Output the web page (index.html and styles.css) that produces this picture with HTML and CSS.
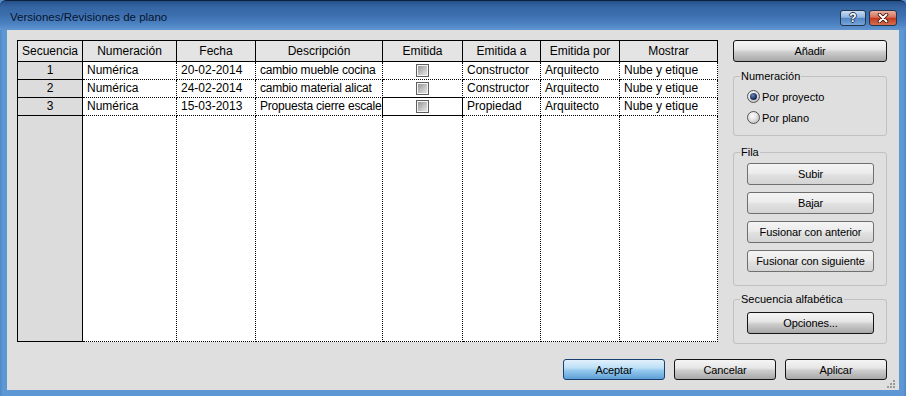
FILE: index.html
```html
<!DOCTYPE html>
<html lang="es">
<head>
<meta charset="utf-8">
<title>Versiones/Revisiones de plano</title>
<link rel="stylesheet" href="styles.css">
</head>
<body>
<div class="window">
  <div class="titlebar">
    <span class="title">Versiones/Revisiones de plano</span>
    <div class="caption">
      <span class="cbtn help">?</span>
      <span class="cbtn close">
        <svg width="12" height="10" viewBox="0 0 12 10"><path d="M2.5 1.5 L9.5 8.5 M9.5 1.5 L2.5 8.5" stroke="#3a0a04" stroke-width="3.6" stroke-linecap="round"/><path d="M2.5 1.5 L9.5 8.5 M9.5 1.5 L2.5 8.5" stroke="#fff" stroke-width="2" stroke-linecap="round"/></svg>
      </span>
    </div>
  </div>
  <div class="client">
    <div class="main">
      <div class="grid">
        <div class="th">Secuencia</div>
        <div class="th">Numeración</div>
        <div class="th">Fecha</div>
        <div class="th">Descripción</div>
        <div class="th">Emitida</div>
        <div class="th">Emitida a</div>
        <div class="th">Emitida por</div>
        <div class="th">Mostrar</div>

        <div class="rh">1</div>
        <div class="td">Numérica</div>
        <div class="td">20-02-2014</div>
        <div class="td desc">cambio mueble cocina</div>
        <div class="td chk"><span class="cb"></span></div>
        <div class="td">Constructor</div>
        <div class="td">Arquitecto</div>
        <div class="td">Nube y etique</div>

        <div class="rh">2</div>
        <div class="td">Numérica</div>
        <div class="td">24-02-2014</div>
        <div class="td desc">cambio material alicat</div>
        <div class="td chk"><span class="cb"></span></div>
        <div class="td">Constructor</div>
        <div class="td">Arquitecto</div>
        <div class="td">Nube y etique</div>

        <div class="rh">3</div>
        <div class="td">Numérica</div>
        <div class="td">15-03-2013</div>
        <div class="td desc">Propuesta cierre escale</div>
        <div class="td chk sel"><span class="cb"></span></div>
        <div class="td">Propiedad</div>
        <div class="td">Arquitecto</div>
        <div class="td">Nube y etique</div>

        <div class="rh"></div>
        <div class="td"></div>
        <div class="td"></div>
        <div class="td"></div>
        <div class="td"></div>
        <div class="td"></div>
        <div class="td"></div>
        <div class="td"></div>
      </div>

      <div class="side">
        <button class="btn">Añadir</button>

        <fieldset class="group g-num">
          <legend>Numeración</legend>
          <div class="radio"><span class="rb"><span class="dot"></span></span><span>Por proyecto</span></div>
          <div class="radio"><span class="rb"></span><span>Por plano</span></div>
        </fieldset>

        <fieldset class="group g-fila">
          <legend>Fila</legend>
          <div class="stack">
            <button class="btn light">Subir</button>
            <button class="btn light">Bajar</button>
            <button class="btn light">Fusionar con anterior</button>
            <button class="btn light">Fusionar con siguiente</button>
          </div>
        </fieldset>

        <fieldset class="group g-seq">
          <legend>Secuencia alfabética</legend>
          <button class="btn">Opciones...</button>
        </fieldset>
      </div>
    </div>

    <div class="footer">
      <button class="btn fbtn default">Aceptar</button>
      <button class="btn fbtn">Cancelar</button>
      <button class="btn fbtn">Aplicar</button>
    </div>

    <svg class="grip" width="10" height="10" viewBox="0 0 10 10">
      <rect x="7" y="1" width="2" height="2" fill="#9a9a9a"/>
      <rect x="4" y="4" width="2" height="2" fill="#9a9a9a"/>
      <rect x="7" y="4" width="2" height="2" fill="#9a9a9a"/>
      <rect x="1" y="7" width="2" height="2" fill="#9a9a9a"/>
      <rect x="4" y="7" width="2" height="2" fill="#9a9a9a"/>
      <rect x="7" y="7" width="2" height="2" fill="#9a9a9a"/>
    </svg>
  </div>
</div>
</body>
</html>
```
FILE: styles.css
```css
* { box-sizing: border-box; }

html, body {
  margin: 0;
  padding: 0;
}

body {
  width: 906px;
  height: 396px;
  overflow: hidden;
  font-family: "Liberation Sans", Arial, sans-serif;
  background: #5b96d2;
}

.window {
  width: 906px;
  height: 396px;
  display: flex;
  flex-direction: column;
  background: linear-gradient(90deg, #4f88c6 0, #5d98d4 3px, #5d98d4 903px, #4f88c6 906px);
}

.titlebar {
  height: 30px;
  flex: none;
  display: flex;
  justify-content: space-between;
  align-items: flex-start;
  padding: 0 9px 0 10px;
  border-top: 1px solid #0c203d;
  border-radius: 6px 6px 0 0;
  background: linear-gradient(#25508a 0, #3565a3 6px, #3d6fae 14px, #4a80c0 22px, #6196d1 29px);
}

.title {
  margin-top: 9px;
  font-size: 11.5px;
  line-height: 14px;
  color: #07142e;
}

.caption {
  display: flex;
  gap: 3px;
  margin-top: 9px;
}

.cbtn {
  height: 16px;
  border: 1px solid #26344c;
  border-radius: 3px;
  display: flex;
  align-items: center;
  justify-content: center;
}

.help {
  width: 26px;
  background: linear-gradient(#c9def4 0, #8fb4e0 45%, #5486c4 52%, #76a6dc 100%);
  color: #fff;
  font-weight: bold;
  font-size: 12px;
  line-height: 12px;
  text-shadow: 1px 0 0 #1d3456, -1px 0 0 #1d3456, 0 1px 0 #1d3456, 0 -1px 0 #1d3456;
}

.close {
  width: 28px;
  background: linear-gradient(#eab1a2 0, #d76f57 45%, #c23a1f 52%, #d5704f 100%);
}

.client {
  flex: 1;
  margin: 0 7px 6px 7px;
  padding: 10px 12px 0 10px;
  background: #dfdfdf;
  display: flex;
  flex-direction: column;
  position: relative;
}

.main {
  display: flex;
  gap: 15px;
}

/* grid / table */
.grid {
  width: 701px;
  height: 302px;
  display: grid;
  grid-template-columns: 65px 94px 79px 127px 80px 78px 79px 98px;
  grid-template-rows: 21px 18px 18px 18px 1fr;
  border-top: 1px solid #000;
  border-left: 1px solid #000;
  background: #fff;
  font-size: 12px;
  color: #000;
}

.th {
  background: #e4e4e4;
  border-right: 1px solid #000;
  border-bottom: 1px solid #000;
  display: flex;
  align-items: center;
  justify-content: center;
  padding-bottom: 1px;
}

.rh {
  background: #dcdcdc;
  border-right: 1px solid #000;
  border-bottom: 1px solid #000;
  text-align: center;
  line-height: 17px;
}

.td {
  border-right: 1px dotted #000;
  border-bottom: 1px dotted #000;
  padding-left: 4px;
  line-height: 17px;
  white-space: nowrap;
  overflow: hidden;
}

.desc {
  letter-spacing: -0.2px;
}

.chk {
  display: flex;
  align-items: center;
  justify-content: center;
  padding-left: 0;
}

.sel {
  border-right: 1px solid #000;
  border-bottom: 1px solid #000;
  box-shadow: -1px -1px 0 #000;
}

.cb {
  width: 13px;
  height: 13px;
  border: 1px solid #5e5e5e;
  background: linear-gradient(135deg, #8e8e8e 0, #c4c4c4 55%, #ececec 100%);
  box-shadow: inset 0 0 0 1px #f4f4f4;
}

/* side panel */
.side {
  width: 154px;
  display: flex;
  flex-direction: column;
}

.btn {
  margin: 0;
  height: 22px;
  border: 1px solid #151515;
  border-radius: 3px;
  padding: 0;
  font-family: "Liberation Sans", Arial, sans-serif;
  font-size: 11px;
  letter-spacing: -0.1px;
  color: #000;
  background: linear-gradient(#f5f5f5 0, #e6e6e6 42%, #cdcdcd 55%, #a8a8a8 100%);
  display: flex;
  align-items: center;
  justify-content: center;
}

.btn.light {
  width: 127px;
  border-color: #6f6f6f;
  background: linear-gradient(#f4f4f4 0, #ececec 45%, #e0e0e0 55%, #d4d4d4 100%);
}

.group {
  margin: 0;
  padding: 0 12px 0 13px;
  border: 1px solid #c0c0c0;
  border-radius: 3px;
  min-width: 0;
}

.group legend {
  font-size: 11px;
  line-height: 13px;
  padding: 0 1px;
  margin-left: -7px;
  color: #000;
}

.g-num {
  margin-top: 8px;
  height: 66px;
  padding-top: 3px;
}

.radio {
  height: 21px;
  display: flex;
  align-items: center;
  gap: 2px;
  font-size: 11px;
  color: #000;
}

.rb {
  width: 13px;
  height: 13px;
  border-radius: 50%;
  border: 1px solid #555;
  background: radial-gradient(circle at 40% 35%, #ffffff 0, #e2e2e2 45%, #a9a9a9 100%);
  display: flex;
  align-items: center;
  justify-content: center;
}

.dot {
  width: 7px;
  height: 7px;
  border-radius: 50%;
  background: radial-gradient(circle at 40% 35%, #6b86b8 0, #1d3563 55%, #0b1a3c 100%);
}

.g-fila {
  margin-top: 10px;
  height: 140px;
  padding-top: 4px;
}

.stack {
  display: flex;
  flex-direction: column;
  gap: 7px;
}

.g-seq {
  margin-top: 7px;
  height: 51px;
  padding-top: 6px;
}

.g-seq .btn {
  width: 127px;
}

/* footer */
.footer {
  display: flex;
  justify-content: flex-end;
  gap: 9px;
  margin-top: 15px;
}

.fbtn {
  width: 102px;
  height: 21px;
}

.fbtn.default {
  border-color: #173f70;
  background: linear-gradient(#e2f1fc 0, #bcdff7 42%, #95c9ef 55%, #5f9fd6 100%);
}

.grip {
  position: absolute;
  right: 3px;
  bottom: 1px;
}
```
